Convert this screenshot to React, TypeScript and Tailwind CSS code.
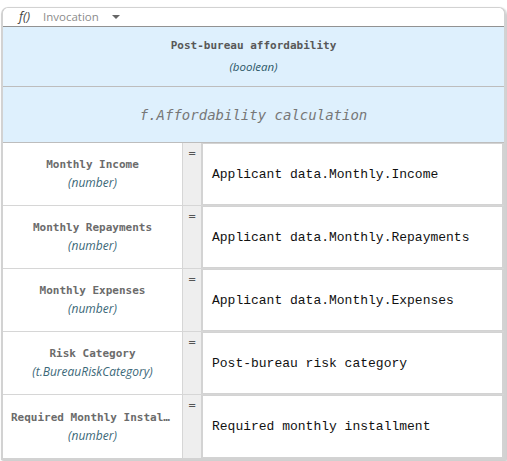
const ROWS = [
  { name: 'Monthly Income', type: '(number)', value: 'Applicant data.Monthly.Income' },
  { name: 'Monthly Repayments', type: '(number)', value: 'Applicant data.Monthly.Repayments' },
  { name: 'Monthly Expenses', type: '(number)', value: 'Applicant data.Monthly.Expenses' },
  { name: 'Risk Category', type: '(t.BureauRiskCategory)', value: 'Post-bureau risk category' },
  { name: 'Required Monthly Installment', type: '(number)', value: 'Required monthly installment' },
]

const mono = "font-['DejaVu_Sans_Mono',monospace]"
const sans = "font-['Open_Sans',sans-serif]"

export default function App() {
  return (
    <div className="h-[461px] w-[507px] bg-white pt-[7px] pl-[1px] pr-[1px]">
      <div className="overflow-hidden rounded-t-[7px] border-x-2 border-b-2 border-t border-[#d2d2d2] shadow-[1px_1px_2px_rgba(0,0,0,0.25)]">
        {/* Barra de invocação */}
        <div className={`flex h-[19px] items-center border-b border-[#929292] bg-white ${sans}`}>
          <span className="ml-[16px] text-[12.5px] italic text-[#444]">f()</span>
          <span className="ml-[13px] text-[11.5px] text-[#8c8c8c]">Invocation</span>
          <span className="ml-[13px] h-0 w-0 border-x-[4px] border-t-[4px] border-x-transparent border-t-[#666]" />
        </div>

        {/* Cabeçalho */}
        <div className="flex h-[60px] flex-col items-center justify-center gap-[3px] border-b border-[#bdbdbd] bg-[#def0fd]">
          <p className={`text-[11px] font-bold text-[#585858] ${mono}`}>Post-bureau affordability</p>
          <p className={`text-[11.5px] italic text-[#2b5666] ${sans}`}>(boolean)</p>
        </div>
        <div className="flex h-[56px] items-center justify-center border-b border-[#bdbdbd] bg-[#def0fd] pt-[1px]">
          <p className={`text-[14px] italic text-[#777] ${mono}`}>f.Affordability calculation</p>
        </div>

        {/* Linhas */}
        {ROWS.map((r, i) => (
          <div key={r.name} className={`flex h-[63px] ${i < ROWS.length - 1 ? 'border-b border-[#d6d6d6]' : ''}`}>
            <div className="flex w-[180px] min-w-0 flex-col items-center justify-center gap-[1px] border-r border-[#d6d6d6] px-[8px]">
              <p className={`w-full truncate text-center text-[11px] leading-[17px] font-bold text-[#6b6b6b] ${mono}`}>{r.name}</p>
              <p className={`text-[12px] leading-[18px] italic text-[#3b6878] ${sans}`}>{r.type}</p>
            </div>
            <div className="flex w-[20px] justify-center border-r-2 border-[#d3d3d3] bg-[#eeeeee] pt-[4px] text-[12px] leading-none text-[#555]">
              <span className={mono}>=</span>
            </div>
            <div className={`flex flex-1 items-center border-y border-r-2 border-[#d3d3d3] bg-white pl-[9px] pt-[1px] text-[13px] text-[#111] font-['Liberation_Mono',monospace]`}>
              {r.value}
            </div>
          </div>
        ))}
      </div>
    </div>
  )
}
